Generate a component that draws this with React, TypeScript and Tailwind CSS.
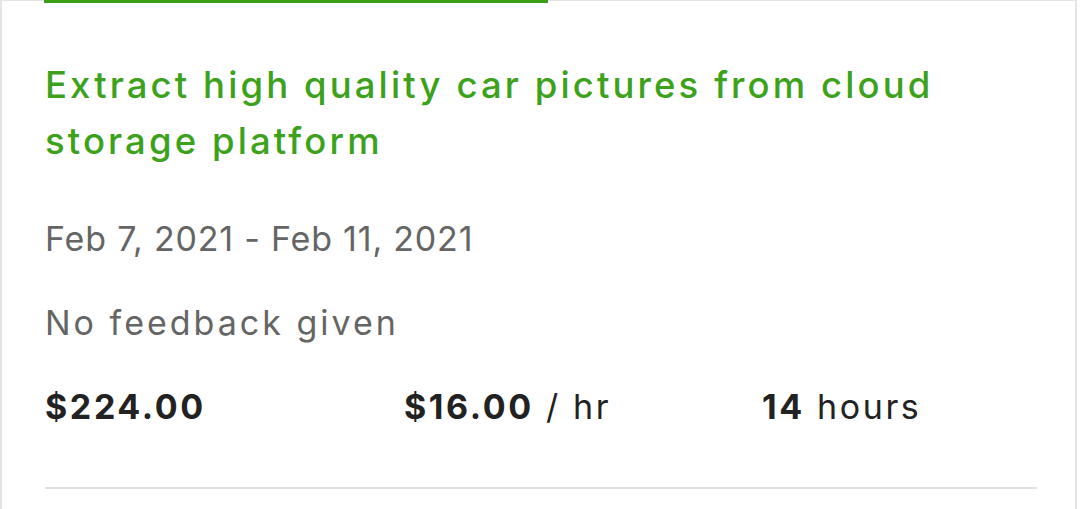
import React from "react";

export default function App() {
  return (
    <div className="w-[1080px] h-[509px] bg-white overflow-hidden" style={{ fontFamily: "Inter, 'DejaVu Sans', sans-serif" }}>
      <div className="w-[1077px] h-[509px] border-l-2 border-r-2 border-t border-[#e4e4e4] relative">
        <div className="absolute left-[42px] top-[-1px] w-[504px] h-[3px] bg-[#3aa017]" />
        <div className="pl-[43px] pr-[38px] pt-[56px]">
          <h1 className="text-[36.5px] leading-[56px] font-medium text-[#3ca11b] tracking-[3.1px]">
            Extract high quality car pictures from cloud storage platform
          </h1>
          <div className="mt-[50px] text-[34px] leading-[40px] text-[#656565] tracking-[0.8px]">
            Feb 7, 2021 - Feb 11, 2021
          </div>
          <div className="mt-[44px] text-[34px] leading-[40px] text-[#656565] tracking-[3px]">
            No feedback given
          </div>
          <div className="mt-[44px] grid grid-cols-[359px_358px_1fr] text-[34px] leading-[40px] text-[#222] tracking-[2.6px]">
            <div className="font-bold">$224.00</div>
            <div><span className="font-bold">$16.00</span> / hr</div>
            <div><span className="font-bold">14</span> hours</div>
          </div>
          <div className="mt-[60px] h-[2px] bg-[#e0e0e0]" />
        </div>
      </div>
    </div>
  );
}
